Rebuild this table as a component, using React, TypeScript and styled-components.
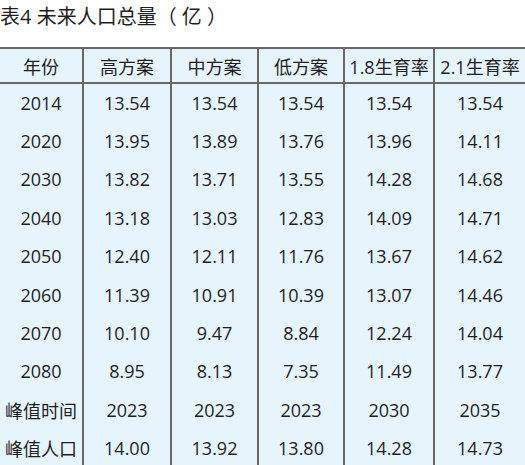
import styled, { createGlobalStyle } from 'styled-components';

const GlobalStyle = createGlobalStyle`
  html, body {
    margin: 0;
    padding: 0;
    background: #ffffff;
  }
  body {
    font-family: "Open Sans", "Noto Sans CJK SC", sans-serif;
    color: #1f1f1f;
  }
`;

const Page = styled.div`
  width: 525px;
  height: 465px;
  overflow: hidden;
`;

const Title = styled.h1`
  margin: 0;
  height: 47px;
  padding-top: 5px;
  box-sizing: border-box;
  font-size: 20px;
  line-height: 24px;
  font-weight: 400;
  color: #1f1f1f;
`;

const Grid = styled.div`
  display: grid;
  grid-template-columns: 82px 86px 85px 84px 88px 1fr;
  column-gap: 2px;
  background: #686868;
  border-top: 2px solid #686868;
`;

const Cell = styled.div<{ $head?: boolean }>`
  background: #e6f4fc;
  height: ${p => (p.$head ? '35px' : '38.4px')};
  border-bottom: ${p => (p.$head ? '2px solid #686868' : 'none')};
  display: flex;
  align-items: center;
  justify-content: center;
  padding-bottom: ${p => (p.$head ? '0' : '1px')};
  box-sizing: border-box;
  font-size: 18px;
  white-space: nowrap;
  color: #1f1f1f;
`;

const headers = ['年份', '高方案', '中方案', '低方案', '1.8生育率', '2.1生育率'];

const rows: string[][] = [
  ['2014', '13.54', '13.54', '13.54', '13.54', '13.54'],
  ['2020', '13.95', '13.89', '13.76', '13.96', '14.11'],
  ['2030', '13.82', '13.71', '13.55', '14.28', '14.68'],
  ['2040', '13.18', '13.03', '12.83', '14.09', '14.71'],
  ['2050', '12.40', '12.11', '11.76', '13.67', '14.62'],
  ['2060', '11.39', '10.91', '10.39', '13.07', '14.46'],
  ['2070', '10.10', '9.47', '8.84', '12.24', '14.04'],
  ['2080', '8.95', '8.13', '7.35', '11.49', '13.77'],
  ['峰值时间', '2023', '2023', '2023', '2030', '2035'],
  ['峰值人口', '14.00', '13.92', '13.80', '14.28', '14.73'],
];

export default function App() {
  return (
    <Page>
      <GlobalStyle />
      <Title>表4 未来人口总量（ 亿 ）</Title>
      <Grid>
        {headers.map(h => (
          <Cell $head key={h}>{h}</Cell>
        ))}
        {rows.map(r =>
          r.map((v, i) => <Cell key={r[0] + i}>{v}</Cell>)
        )}
      </Grid>
    </Page>
  );
}
